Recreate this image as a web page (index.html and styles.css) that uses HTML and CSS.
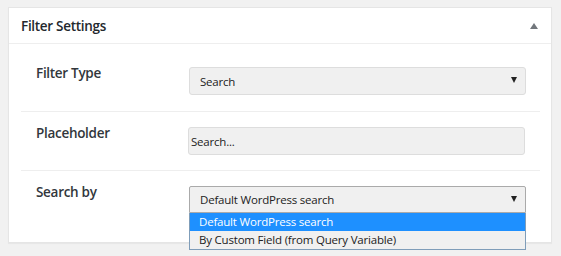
FILE: index.html
```html
<!DOCTYPE html>
<html lang="en">
  <head>
    <meta charset="UTF-8" />
    <meta name="viewport" content="width=device-width, initial-scale=1.0" />
    <title>Filter Settings</title>
    <link rel="stylesheet" href="styles.css">
  </head>
  <body>
    <div class="postbox">
      <div class="postbox-header">
        <h2>Filter Settings</h2>
        <svg class="toggle" width="8" height="6" viewBox="0 0 8 6"><path d="M0 6 L4 0 L8 6 Z" fill="#72777c"/></svg>
      </div>

      <div class="inside">
        <div class="field-row">
          <label>Filter Type</label>
          <div class="select">
            <span>Search</span>
            <svg width="6" height="6" viewBox="0 0 6 6"><path d="M0 0 L6 0 L3 6 Z" fill="#222"/></svg>
          </div>
        </div>

        <div class="field-row">
          <label>Placeholder</label>
          <div class="text-input">Search...</div>
        </div>

        <div class="field-row last">
          <label>Search by</label>
          <div class="select-wrap">
            <div class="select open">
              <span>Default WordPress search</span>
              <svg width="6" height="6" viewBox="0 0 6 6"><path d="M0 0 L6 0 L3 6 Z" fill="#222"/></svg>
            </div>
            <ul class="dropdown">
              <li class="selected">Default WordPress search</li>
              <li>By Custom Field (from Query Variable)</li>
            </ul>
          </div>
        </div>
      </div>
    </div>
  </body>
</html>
```

FILE: styles.css
```css
body {
  margin: 0;
  padding: 7px 9px 0 8px;
  background: #f1f1f1;
  font-family: "Open Sans", "Noto Sans", sans-serif;
  color: #23282d;
  height: 256px;
  box-sizing: border-box;
  overflow: hidden;
}

.postbox {
  background: #fff;
  border: 1px solid #e5e5e5;
  box-shadow: 0 1px 1px rgba(0, 0, 0, 0.04);
  height: 236px;
  box-sizing: border-box;
}

.postbox-header {
  display: flex;
  align-items: center;
  justify-content: space-between;
  height: 35px;
  padding: 0 13px 0 12px;
  border-bottom: 1px solid #eee;
}

.postbox-header h2 {
  margin: 0;
  font-size: 13.5px;
  font-weight: 600;
  letter-spacing: -0.3px;
}

.toggle {
  margin-top: 1px;
}

.inside {
  padding: 8px 11px 0 12px;
}

.field-row {
  display: flex;
  align-items: flex-start;
  padding: 15px 14px 15px 0;
  border-bottom: 1px solid #eee;
}

.field-row:first-child {
  padding-bottom: 16px;
}

.field-row.last {
  border-bottom: none;
}

.field-row label {
  width: 153px;
  padding-left: 15px;
  margin-top: -4px;
  font-size: 13.5px;
  font-weight: 600;
  letter-spacing: -0.3px;
  line-height: 20px;
  color: #32373c;
}

.select,
.text-input {
  width: 337px;
  height: 28px;
  box-sizing: border-box;
  background: #f0f0f0;
  border: 1px solid #ddd;
  border-radius: 3px;
  font-size: 11.5px;
  letter-spacing: -0.2px;
  color: #222;
  display: flex;
  align-items: center;
}

.select {
  justify-content: space-between;
  padding: 0 8px 0 10px;
}

.select svg {
  margin-top: -2px;
}

.text-input {
  margin-left: -1px;
  padding-left: 2px;
}

.select-wrap {
  position: relative;
}

.select.open {
  height: 27px;
  border-color: #aaa;
  border-radius: 2px 2px 0 0;
}

.dropdown {
  position: absolute;
  top: 27px;
  left: 0;
  width: 337px;
  box-sizing: border-box;
  margin: 0;
  padding: 0;
  list-style: none;
  background: #f0f0f0;
  border: 1px solid #7f9db9;
  border-top: none;
  font-size: 11.5px;
  letter-spacing: -0.2px;
  color: #222;
}

.dropdown li {
  height: 18px;
  line-height: 18px;
  padding-left: 9px;
}

.dropdown li.selected {
  background: #1e90ff;
  color: #fff;
}
```
